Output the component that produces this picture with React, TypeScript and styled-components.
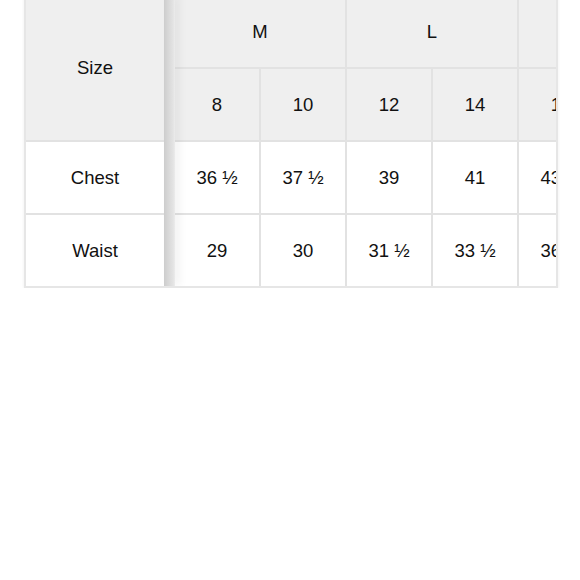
import React from "react";
import styled, { createGlobalStyle } from "styled-components";

const Global = createGlobalStyle`
  html, body { margin: 0; padding: 0; background: #ffffff; }
  body { font-family: "Liberation Sans", Arial, sans-serif; color: #111; }
`;

const LINE = "#e2e2e2";

const Wrapper = styled.div`
  display: flex;
  width: 534px;
  box-sizing: border-box;
  margin: -4px 0 0 24px;
  border: 2px solid #e6e6e6;
  border-top: none;
  background: ${LINE};
  overflow: hidden;
  box-shadow: 0 1px 3px rgba(0, 0, 0, 0.07);
`;

const FixedGrid = styled.div`
  display: grid;
  grid-template-columns: 138px;
  grid-template-rows: 144px 71px 71px;
  row-gap: 2px;
  flex: none;
`;

const Shade = styled.div`
  flex: none;
  width: 11px;
  position: relative;
  z-index: 1;
  background: linear-gradient(to right, #cdcdcd 0%, #d8d8d8 40%, #e4e4e4 85%, #ececec 100%);
  box-shadow: 5px 0 9px rgba(0, 0, 0, 0.05);
`;

const ScrollArea = styled.div`
  flex: 1;
  min-width: 0;
  overflow: hidden;
`;

const ScrollGrid = styled.div`
  display: grid;
  grid-template-columns: repeat(6, 84px);
  grid-auto-rows: 71px;
  gap: 2px;
  width: max-content;
`;

const Cell = styled.div<{ $head?: boolean; $span?: number; $rows?: number }>`
  display: flex;
  align-items: center;
  justify-content: center;
  background: ${(p) => (p.$head ? "#efefef" : "#ffffff")};
  font-size: 18.5px;
  white-space: nowrap;
  grid-column: span ${(p) => p.$span ?? 1};
  grid-row: span ${(p) => p.$rows ?? 1};
`;

const groups = ["M", "L", "XL"];
const sizes = ["8", "10", "12", "14", "16", "18"];
const rows = [
  { label: "Chest", values: ["36 ½", "37 ½", "39", "41", "43 ½", "45 ½"] },
  { label: "Waist", values: ["29", "30", "31 ½", "33 ½", "36 ½", "38"] },
];

export default function App() {
  return (
    <>
      <Global />
      <Wrapper>
        <FixedGrid>
          <Cell $head>Size</Cell>
          {rows.map((r) => (
            <Cell key={r.label}>{r.label}</Cell>
          ))}
        </FixedGrid>
        <Shade />
        <ScrollArea>
          <ScrollGrid>
            {groups.map((g) => (
              <Cell key={g} $head $span={2}>
                {g}
              </Cell>
            ))}
            {sizes.map((s) => (
              <Cell key={s} $head>
                {s}
              </Cell>
            ))}
            {rows.map((r) =>
              r.values.map((v, i) => <Cell key={r.label + i}>{v}</Cell>)
            )}
          </ScrollGrid>
        </ScrollArea>
      </Wrapper>
    </>
  );
}
